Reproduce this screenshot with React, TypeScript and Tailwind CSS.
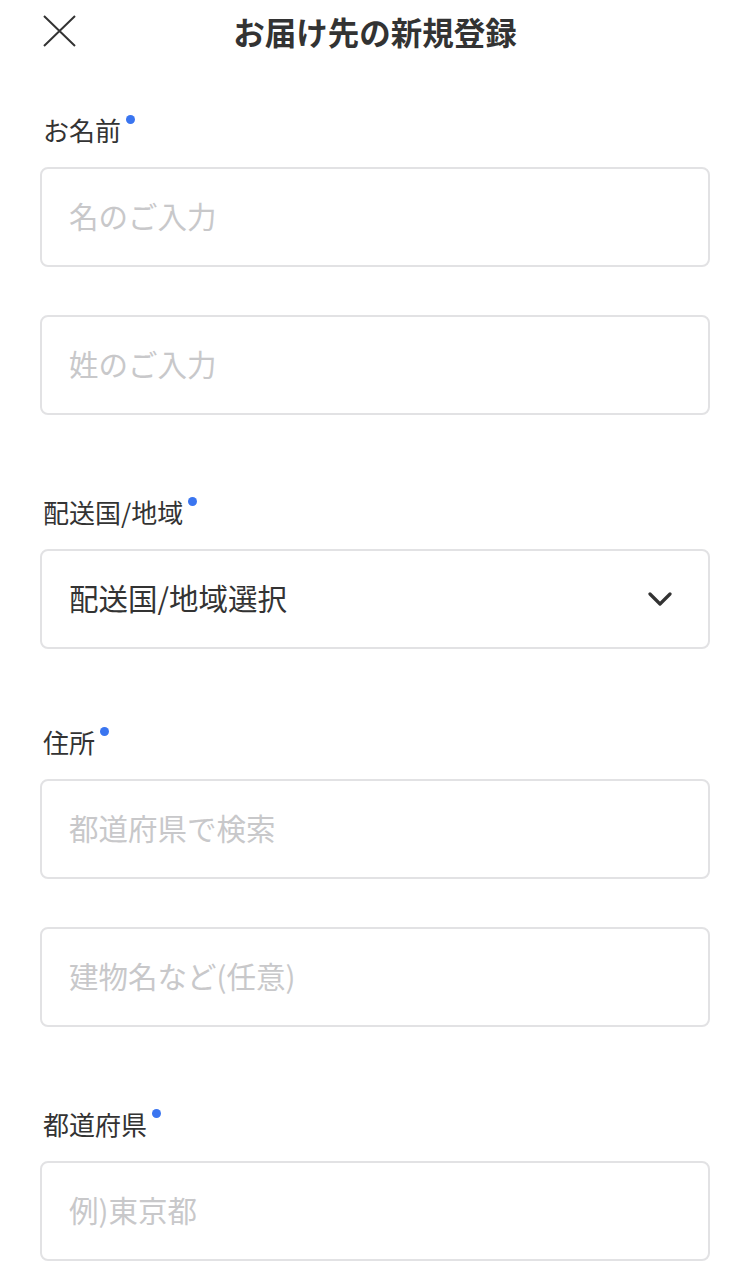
const font = {
  fontFamily: '"Noto Sans CJK JP", "Noto Sans", sans-serif',
};

function Label({ text }: { text: string }) {
  return (
    <div className="mb-[19px] flex h-[36px] items-center pl-[3px]">
      <span className="text-[26px] leading-[36px] text-[#333333]">{text}</span>
      <span className="mb-[22px] ml-[5px] h-[9px] w-[9px] rounded-full bg-[#3a75f0]" />
    </div>
  );
}

function Field({ placeholder }: { placeholder: string }) {
  return (
    <div className="flex h-[100px] items-center rounded-[8px] border-2 border-[#e2e2e4] bg-white px-[27px] pb-[4px]">
      <span className="text-[29.5px] text-[#c8c8ca]">{placeholder}</span>
    </div>
  );
}

export default function App() {
  return (
    <main className="min-h-screen bg-white px-[40px]" style={font}>
      <header className="relative flex h-[64px] items-center justify-center">
        <button className="absolute left-[3px] top-[15px] h-[33px] w-[33px]">
          <svg viewBox="0 0 33 33" className="h-[33px] w-[33px]" fill="none">
            <path d="M1 1 L32 31 M32 1 L1 31" stroke="#333333" strokeWidth="2" />
          </svg>
        </button>
        <h1 className="text-[31.5px] font-bold text-[#333333]">お届け先の新規登録</h1>
      </header>

      <section className="mt-[48px]">
        <Label text="お名前" />
        <div className="flex flex-col gap-[48px]">
          <Field placeholder="名のご入力" />
          <Field placeholder="姓のご入力" />
        </div>
      </section>

      <section className="mt-[79px]">
        <Label text="配送国/地域" />
        <div className="flex h-[100px] items-center justify-between rounded-[8px] border-2 border-[#e2e2e4] px-[27px]">
          <span className="pb-[4px] text-[29.5px] text-[#333333]">配送国/地域選択</span>
          <svg viewBox="0 0 24 14" className="mr-[9px] h-[14px] w-[24px]" fill="none">
            <path d="M2 2 L12 12 L22 2" stroke="#333333" strokeWidth="3.2" strokeLinecap="round" strokeLinejoin="round" />
          </svg>
        </div>
      </section>

      <section className="mt-[75px]">
        <Label text="住所" />
        <div className="flex flex-col gap-[48px]">
          <Field placeholder="都道府県で検索" />
          <Field placeholder="建物名など(任意)" />
        </div>
      </section>

      <section className="mt-[79px]">
        <Label text="都道府県" />
        <Field placeholder="例)東京都" />
      </section>
    </main>
  );
}
